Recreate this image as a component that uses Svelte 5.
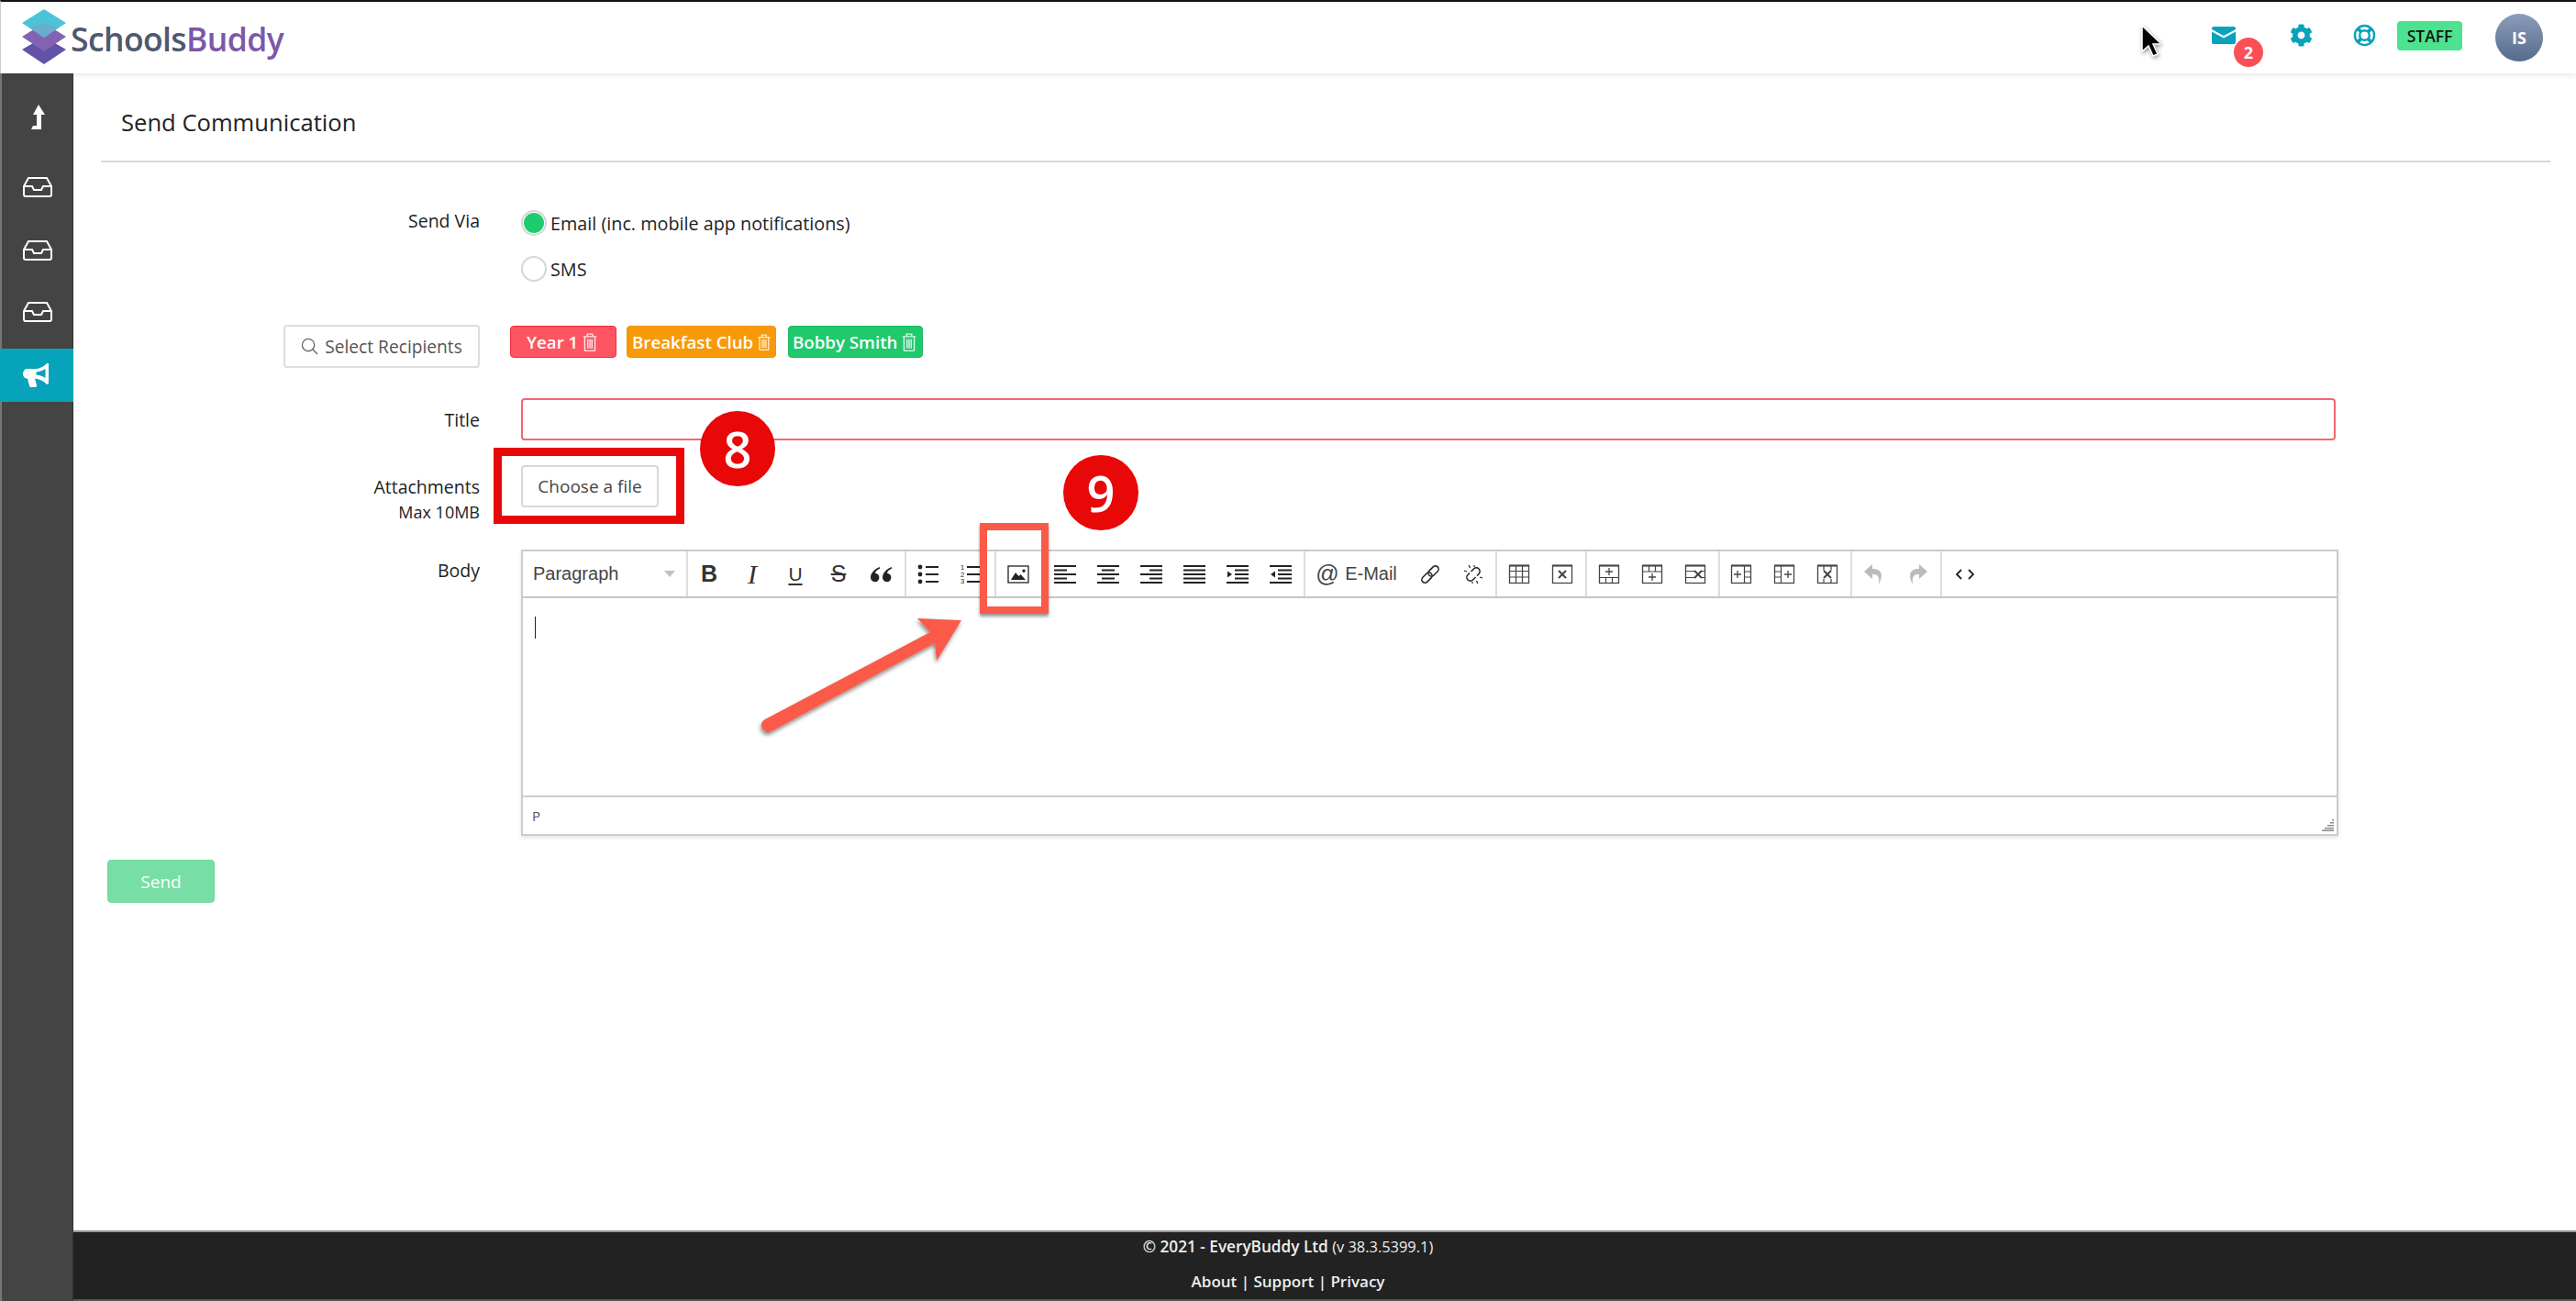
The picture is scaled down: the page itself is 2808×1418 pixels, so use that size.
<script>
  const L = (d) => `<path d="${d}" stroke="currentColor" stroke-width="1.9" fill="none"/>`;
  const T = (d) => `<path d="${d}" stroke="currentColor" stroke-width="1.2" fill="none"/>`;
  const F = (d) => `<path d="${d}" fill="currentColor" stroke="none"/>`;
  const frame = `<rect x="1.5" y="2.5" width="21" height="19" fill="none" stroke="currentColor" stroke-width="1.3"/><path d="M1 2.5h22" stroke="currentColor" stroke-width="2"/>`;
  const X = (x, y) => `<path d="M${x - 4} ${y - 4}l8 8M${x + 4} ${y - 4}l-8 8" stroke="currentColor" stroke-width="2" fill="none"/>`;
  const P = (x, y) => `<path d="M${x - 4} ${y}h8M${x} ${y - 4}v8" stroke="currentColor" stroke-width="1.3" fill="none"/>`;
  const link = `<g transform="rotate(-45 12 12)" fill="none" stroke="currentColor" stroke-width="1.5"><rect x="0.5" y="8.5" width="13" height="7" rx="3.5"/><rect x="10.5" y="8.5" width="13" height="7" rx="3.5"/></g>`;
  const icons = {
    quote: F('M10 4C5 6 0 10 0 15.500a4.700 4.700 0 1 0 5-4.700c.2-2 2-4 5-5zM23 4c-5 2-10 6-10 11.500a4.700 4.700 0 1 0 5-4.700c.2-2 2-4 5-5z'),
    ul: `<circle cx="3" cy="4" r="2.400" fill="currentColor"/><circle cx="3" cy="12" r="2.400" fill="currentColor"/><circle cx="3" cy="20" r="2.400" fill="currentColor"/>` + L('M9 4h14M9 12h14M9 20h14'),
    ol: `<text x="0" y="7" font-size="7.500" font-family="Liberation Sans" fill="currentColor">1</text><text x="0" y="14.500" font-size="7.500" font-family="Liberation Sans" fill="currentColor">2</text><text x="0" y="22" font-size="7.500" font-family="Liberation Sans" fill="currentColor">3</text>` + L('M7 4h16M7 12h16M7 20h16'),
    image: `<rect x="1" y="3" width="22" height="18" fill="none" stroke="currentColor" stroke-width="1.300"/>` + F('M4 18l5-8 3.500 4 2-2 5.500 6zM18 6.500a1.700 1.700 0 1 0 .01 0z'),
    al: L('M0 3h24M0 7.500h14M0 12h24M0 16.500h14M0 21h24'),
    ac: L('M0 3h24M5 7.500h14M0 12h24M5 16.500h14M0 21h24'),
    ar: L('M0 3h24M10 7.500h14M0 12h24M10 16.500h14M0 21h24'),
    aj: L('M0 3h24M0 7.500h24M0 12h24M0 16.500h24M0 21h24'),
    indent: L('M0 3h24M9 7.500h15M9 12h15M9 16.500h15M0 21h24') + F('M1 8.500l5 3.500-5 3.500z'),
    outdent: L('M0 3h24M9 7.500h15M9 12h15M9 16.500h15M0 21h24') + F('M6 8.500l-5 3.500 5 3.500z'),
    link,
    unlink: `<path d="M9.500 9l3-3a3.500 3.500 0 0 1 5.500 5.500l-2 2M14.500 15l-3 3a3.500 3.500 0 0 1-5.500-5.500l2-2" fill="none" stroke="currentColor" stroke-width="1.500"/>` + T('M7 2l1.500 3M2 8l3 1M17 22l-1.500-3M22 16l-3-1M13 2v2M11 22v-2'),
    table: frame + T('M1.500 8.500h21M1.500 15h21M8.500 2.500v19M15.500 2.500v19'),
    tabledel: frame + X(12, 12),
    rowbefore: frame + T('M1.500 15.500h21M8.500 15.500v6M15.500 15.500v6') + P(12, 9),
    rowafter: frame + T('M1.500 9h21M8.500 2.500v6.500M15.500 2.500v6.500') + P(12, 15),
    rowdel: frame + T('M1.500 8.500h10M1.500 15.500h10M18 8.500h4.500M18 15.500h4.500') + X(15, 12),
    colbefore: frame + T('M15.500 2.500v19M15.500 9h7M15.500 15h7') + P(8, 12),
    colafter: frame + T('M8.500 2.500v19M1.500 9h7M1.500 15h7') + P(16, 12),
    coldel: frame + T('M8 2.500v5M16 2.500v5M8 17v4.500M16 17v4.500') + X(12, 12),
    undo: F('M10 1L1 9l9 8v-5c6 0 8 2 7 11 5-10 4-17-7-17z'),
    redo: F('M14 1l9 8-9 8v-5c-6 0-8 2-7 11C2 13 3 6 14 6z'),
    code: `<path d="M8 7l-5 5 5 5M16 7l5 5-5 5" fill="none" stroke="currentColor" stroke-width="1.800"/>`
  };
  const groups = [
    { w: 238, items: ['#B', '#I', '#U', '#S', 'quote'] },
    { w: 98, items: ['ul', 'ol'] },
    { w: 52, items: ['image'] },
    { w: 285, items: ['al', 'ac', 'ar', 'aj', 'indent', 'outdent'] },
    { w: 209, items: ['@email', 'link', 'unlink'] },
    { w: 98, items: ['table', 'tabledel'] },
    { w: 145, items: ['rowbefore', 'rowafter', 'rowdel'] },
    { w: 144, items: ['colbefore', 'colafter', 'coldel'] },
    { w: 98, items: ['undo', 'redo'] },
    { w: 54, items: ['code'] }
  ];
  const glyphClass = { B: 'g-b', I: 'g-i', U: 'g-u', S: 'g-s' };
  const tags = [
    { label: 'Year 1', cls: 'red' },
    { label: 'Breakfast Club', cls: 'orange' },
    { label: 'Bobby Smith', cls: 'green' }
  ];
  const gear = 'M487.4 315.7l-42.6-24.6c4.3-23.2 4.3-47 0-70.2l42.6-24.6c4.9-2.8 7.1-8.6 5.5-14-11.1-35.6-30-67.8-54.7-94.6-3.8-4.1-10-5.1-14.8-2.3L380.8 110c-17.9-15.4-38.5-27.3-60.8-35.1V25.8c0-5.6-3.9-10.5-9.4-11.7-36.7-8.2-74.3-7.8-109.2 0-5.5 1.2-9.4 6.1-9.4 11.7V75c-22.2 7.9-42.8 19.8-60.8 35.1L88.7 85.5c-4.9-2.8-11-1.9-14.8 2.3-24.7 26.7-43.6 58.9-54.7 94.6-1.7 5.4.6 11.2 5.5 14L67.3 221c-4.3 23.2-4.3 47 0 70.2l-42.6 24.6c-4.9 2.8-7.1 8.6-5.5 14 11.1 35.6 30 67.8 54.7 94.6 3.8 4.1 10 5.1 14.8 2.3l42.6-24.6c17.9 15.4 38.5 27.3 60.8 35.1v49.2c0 5.6 3.9 10.5 9.4 11.7 36.7 8.2 74.3 7.8 109.2 0 5.5-1.2 9.4-6.1 9.4-11.7v-49.2c22.2-7.9 42.8-19.8 60.8-35.1l42.6 24.6c4.9 2.8 11 1.9 14.8-2.3 24.7-26.7 43.6-58.9 54.7-94.6 1.5-5.5-.7-11.3-5.6-14.1zM256 336c-44.1 0-80-35.9-80-80s35.9-80 80-80 80 35.9 80 80-35.9 80-80 80z';
</script>

<div class="app">
  <header class="top">
    <div class="logo">
      <svg class="logo-mark" viewBox="0 0 48 60" width="48" height="60">
        <path d="M24 30l24 14-24 16L0 44z" fill="#6353a8"/>
        <path d="M24 15l24 15-24 16L0 30z" fill="#8462b2"/>
        <path d="M24 0l24 15-24 16L0 15z" fill="#4bc4d6"/>
        <path d="M24 15l16 5-16 11L8 20z" fill="#68aecb"/>
      </svg>
      <span class="logo-text"><span class="s1">Schools</span><span class="s2">Buddy</span></span>
    </div>
    <div class="top-right">
      <div class="mail">
        <svg viewBox="0 0 26 19" width="26" height="19"><path d="M2 0h22a2 2 0 0 1 2 2v1L13 10 0 3V2a2 2 0 0 1 2-2zM0 5.500l13 7 13-7V17a2 2 0 0 1-2 2H2a2 2 0 0 1-2-2z" fill="#08a2bb"/></svg>
        <span class="badge">2</span>
      </div>
      <svg class="gear" viewBox="0 0 512 512" width="25" height="25"><path d={gear} fill="#08a2bb"/></svg>
      <svg class="ring" viewBox="0 0 26 26" width="25" height="25">
        <circle cx="13" cy="13" r="11" fill="none" stroke="#08a2bb" stroke-width="2.500"/>
        <circle cx="13" cy="13" r="5.500" fill="none" stroke="#08a2bb" stroke-width="2.500"/>
        <path d="M5 5l4 4M21 5l-4 4M5 21l4-4M21 21l-4-4" stroke="#08a2bb" stroke-width="4"/>
      </svg>
      <span class="staff">STAFF</span>
      <span class="avatar">IS</span>
    </div>
  </header>

  <div class="shell">
    <nav class="side">
      <div class="nav-item">
        <svg viewBox="0 0 24 30" width="24" height="30"><path d="M13 0l7 11h-4v16H5l2-4h4V11H7z" fill="#fff"/></svg>
      </div>
      {#each [0, 1, 2] as i}
        <div class="nav-item">
          <svg viewBox="0 0 32 22" width="32" height="22" fill="none" stroke="#fff" stroke-width="2"><path d="M6 1h20l5 9v9a2 2 0 0 1-2 2H3a2 2 0 0 1-2-2v-9zM1 10h9l2 4h8l2-4h9"/></svg>
        </div>
      {/each}
      <div class="nav-item active">
        <svg viewBox="0 0 30 26" width="30" height="26"><path d="M28 0v22l-2 1c-4-4-8-6-13-6.500L15 24c.2 1-.5 2-1.500 2H9c-1 0-1.500-.5-2-1.500L5 16.500H4C2 16.500 0 14 0 11.500S2 6 4 6h8c6 0 10-2 14-6zM24.500 6c-3 2-6 3-10 3.500v3c4 .5 7 1.500 10 3.500z" fill="#fff" fill-rule="evenodd"/></svg>
      </div>
    </nav>

    <main class="main">
      <div class="page-head"><h1>Send Communication</h1></div>

      <section class="form">
        <div class="row via">
          <div class="label lab-via">Send Via</div>
          <div class="radios">
            <div class="radio-line"><span class="radio on"></span><span>Email (inc. mobile app notifications)</span></div>
            <div class="radio-line"><span class="radio"></span><span>SMS</span></div>
          </div>
        </div>

        <div class="row rec">
          <div class="label">
            <button class="select-btn">
              <svg viewBox="0 0 20 20" width="19" height="19" fill="none" stroke="#666" stroke-width="1.400"><circle cx="8.500" cy="8.500" r="7"/><path d="M13.500 13.500l5.500 5.500"/></svg>
              Select Recipients
            </button>
          </div>
          <div class="tags">
            {#each tags as t}
              <span class="tag {t.cls}">{t.label}
                <svg viewBox="0 0 14 18" width="16" height="20" fill="none" stroke="currentColor" stroke-width="1.300" opacity="0.850"><path d="M0.500 3.500h13M4.500 3.500V1h5v2.500M2 3.500v13a1 1 0 0 0 1 1h8a1 1 0 0 0 1-1v-13M5 6v9M7 6v9M9 6v9"/></svg>
              </span>
            {/each}
          </div>
        </div>

        <div class="row title-row">
          <div class="label">Title</div>
          <input class="title-input" type="text" />
        </div>

        <div class="row attach">
          <div class="label"><div>Attachments</div><div class="small">Max 10MB</div></div>
          <button class="file-btn">Choose a file</button>
        </div>

        <div class="row body-row">
          <div class="label lab-body">Body</div>
          <div class="editor">
            <div class="toolbar">
              <div class="format"><span>Paragraph</span><span class="caret"></span></div>
              {#each groups as g}
                <div class="group" style="width:{g.w}px">
                  {#each g.items as it}
                    {#if it[0] === '#'}
                      <span class="tb glyph {glyphClass[it[1]]}">{it[1]}</span>
                    {:else if it === '@email'}
                      <span class="tb email"><span class="at">@</span> E-Mail</span>
                    {:else}
                      <span class="tb" class:muted={it === 'undo' || it === 'redo'} class:table-ic={it.startsWith('table') || it.startsWith('row') || it.startsWith('col')}>
                        <svg viewBox="0 0 24 24" width="24" height="24">{@html icons[it]}</svg>
                      </span>
                    {/if}
                  {/each}
                </div>
              {/each}
            </div>
            <div class="edit-area"><span class="text-caret"></span></div>
            <div class="status">P
              <svg class="grip" viewBox="0 0 14 14" width="14" height="14" fill="#888">
                <rect x="12" y="1" width="2" height="1.500"/><rect x="10" y="4" width="4" height="1.500"/><rect x="7" y="7" width="7" height="1.500"/><rect x="4" y="10" width="10" height="1.500"/><rect x="1" y="12.500" width="13" height="1.500"/>
              </svg>
            </div>
          </div>
        </div>

        <button class="send">Send</button>
      </section>

      <div class="spacer"></div>

      <footer class="foot">
        <div><span class="strong">© 2021 - EveryBuddy Ltd</span> <span class="ver">(v 38.3.5399.1)</span></div>
        <div class="foot-links">About | Support | Privacy</div>
      </footer>
    </main>
  </div>

  <!-- annotations laid over the screenshot -->
  <svg class="cursor" viewBox="0 0 22 36" width="22" height="36">
    <path d="M2 1v28l7-6 5 11 5-2-5-11h9z" fill="#000" stroke="#fff" stroke-width="1.500"/>
  </svg>
  <div class="box-file"></div>
  <div class="box-image"></div>
  <span class="num n8">8</span>
  <span class="num n9">9</span>
  <svg class="arrow" viewBox="0 0 240 130" width="240" height="130">
    <defs><filter id="sh" x="-10%" y="-10%" width="120%" height="130%"><feDropShadow dx="-1" dy="3" stdDeviation="2" flood-color="#000" flood-opacity="0.450"/></filter></defs>
    <path d="M219 3l-48-2 14 15L5 111a7 7 0 0 0-3 10 7 7 0 0 0 10 3l178-96 2 19z" fill="#fb5a48" filter="url(#sh)"/>
  </svg>
</div>

<style>
  :global(body) { margin: 0; background: #fff; }
  .app { position: relative; width: 2808px; height: 1418px; overflow: hidden; display: flex; flex-direction: column; font-family: "Open Sans", sans-serif; color: #222; background: #fff; }

  .top { flex: 0 0 80px; box-sizing: border-box; border-top: 2px solid #111; border-left: 1px solid #ccc; display: flex; align-items: center; justify-content: space-between; background: #fff; box-shadow: 0 3px 5px rgba(0,0,0,.08); position: relative; z-index: 1; }
  .logo { display: flex; align-items: center; padding-left: 23px; gap: 5px; margin-top: -2px; }
  .logo-text { font-size: 35.500px; font-weight: 600; letter-spacing: -0.6px; margin-top: 4px; }
  .s1 { color: #4f596d; }
  .s2 { color: #7b58a8; }
  .top-right { display: flex; align-items: center; padding-right: 36px; }
  .mail { position: relative; display: flex; margin-top: -6px; }
  .badge { position: absolute; left: 24px; top: 12px; width: 32px; height: 32px; border-radius: 50%; background: #fb4f57; color: #fff; font-size: 18px; font-weight: 700; display: flex; align-items: center; justify-content: center; }
  .gear { margin-left: 59px; margin-top: -6px; }
  .ring { margin-left: 44px; margin-top: -6px; }
  .staff { margin-left: 23px; width: 71px; height: 32px; margin-top: -4px; box-sizing: border-box; border-radius: 4px; background: #4de28f; color: #111; font-size: 17.500px; font-weight: 600; display: flex; align-items: center; justify-content: center; }
  .avatar { margin-left: 36px; width: 52px; height: 52px; margin-top: 0; border-radius: 50%; background: linear-gradient(#8a9dba, #566b8b); color: #fff; font-size: 18px; font-weight: 700; display: flex; align-items: center; justify-content: center; }

  .shell { flex: 1; display: flex; min-height: 0; }
  .side { flex: 0 0 80px; box-sizing: border-box; background: #444; border-left: 2px solid #777; border-right: 1px solid #333; padding-top: 15px; display: flex; flex-direction: column; }
  .nav-item { height: 68px; display: flex; align-items: center; justify-content: center; }
  .nav-item:nth-child(2) { margin-top: 7px; }
  .nav-item:nth-child(3) { margin-top: 1px; }
  .nav-item:nth-child(4) { margin-top: -1px; }
  .nav-item.active { height: 58px; margin-top: 6px; margin-left: -2px; margin-right: -1px; background: #06a3bb; }

  .main { flex: 1; min-width: 0; display: flex; flex-direction: column; padding-left: 30px; }
  .page-head { height: 97px; margin-right: 28px; box-sizing: border-box; border-bottom: 2px solid #d8d8d8; padding: 39px 0 0 22px; }
  h1 { margin: 0; font-size: 25.600px; line-height: 30px; font-weight: 500; color: #222; }

  .form { padding-top: 41px; font-size: 19.500px; }
  .row { display: flex; gap: 45px; }
  .label { width: 413px; flex: none; text-align: right; font-weight: 500; font-size: 19.500px; color: #222; display: flex; flex-direction: column; justify-content: center; align-items: flex-end; }
  .lab-via { justify-content: flex-start; padding-top: 11px; line-height: 24px; height: 50px; box-sizing: border-box; }
  .lab-body { justify-content: flex-start; padding-top: 11px; line-height: 24px; }
  .small { font-size: 18px; font-weight: 500; line-height: 22px; margin-top: 4px; }
  .attach { height: 46px; }
  .attach .label { justify-content: flex-start; line-height: 24px; padding-top: 12px; height: 60px; box-sizing: border-box; }
  .radios { display: flex; flex-direction: column; }
  .radio-line { height: 50px; display: flex; align-items: center; gap: 4px; font-weight: 500; font-size: 19.800px; color: #222; }
  .radio { width: 28px; height: 28px; box-sizing: border-box; border: 2px solid #d6d6d6; border-radius: 50%; background: #fff; position: relative; }
  .radio.on::after { content: ""; position: absolute; inset: 1px; border-radius: 50%; background: #1ecb6e; }

  .rec { margin-top: 36px; gap: 33px; }
  .select-btn { height: 47px; width: 214px; box-sizing: border-box; border: 2px solid #ddd; border-radius: 4px; background: #fff; color: #555; font: 500 19.200px "Open Sans", sans-serif; display: flex; align-items: center; justify-content: center; gap: 7px; padding: 0; }
  .tags { display: flex; gap: 11px; align-items: flex-start; margin-top: 1px; }
  .tag { height: 35px; box-sizing: border-box; border-radius: 4px; border: 1px solid; color: #fff; font-size: 18.700px; font-weight: 600; display: flex; align-items: center; gap: 5px; white-space: nowrap; }
  .red { background: #fd5561; border-color: #f02c3d; padding: 0 12px 0 17px; width: 116px; }
  .orange { background: #f79a0a; border-color: #ef9100; padding: 0 5px; width: 163px; margin-right: 2px; }
  .green { background: #1fc96c; border-color: #1ab862; padding: 0 5px 0 4px; width: 147px; }

  .title-row { margin-top: 33px; }
  .title-input { width: 1978px; height: 46px; box-sizing: border-box; border: 2px solid #f5656e; border-radius: 4px; background: #fff; outline: none; }

  .attach { margin-top: 27px; }
  .file-btn { width: 150px; height: 46px; box-sizing: border-box; border: 2px solid #d8d8d8; border-radius: 4px; background: #fff; color: #444; font: 500 19px "Open Sans", sans-serif; padding: 0; }

  .body-row { margin-top: 46px; margin-bottom: 26px; }
  .editor { width: 1981px; height: 312px; box-sizing: border-box; border: 2px solid #ccc; display: flex; flex-direction: column; box-shadow: 0 2px 4px rgba(0,0,0,.12); background: #fff; }
  .toolbar { height: 49px; flex: none; border-bottom: 2px solid #c6c6c6; display: flex; box-sizing: content-box; }
  .format { width: 178px; box-sizing: border-box; padding: 0 12px 0 11px; display: flex; align-items: center; justify-content: space-between; font: 20px "Liberation Sans", sans-serif; color: #444; flex: none; }
  .caret { width: 0; height: 0; border: 6px solid transparent; border-top: 7px solid #b9c2cc; border-bottom: 0; }
  .group { flex: none; box-sizing: border-box; border-left: 2px solid #ddd; display: flex; align-items: center; justify-content: center; padding-right: 2px; }
  .group:last-child { justify-content: flex-start; padding-left: 1px; padding-right: 0; }
  .tb { width: 47px; flex: none; display: flex; align-items: center; justify-content: center; color: #222; height: 100%; }
  .tb svg { display: block; }
  .table-ic { color: #444; }
  .muted { color: #bbb; }
  .glyph { font: 25px "Liberation Serif", serif; color: #333; }
  .g-b { font-weight: 700; font-family: "Liberation Sans", sans-serif; font-size: 25px; }
  .g-i { font-style: italic; font-size: 30px; }
  .g-u { text-decoration: underline; font-family: "Liberation Sans", sans-serif; font-size: 21px; text-underline-offset: 3px; }
  .g-s { text-decoration: line-through; font-family: "Liberation Sans", sans-serif; font-size: 25px; }
  .email { width: 114px; font: 20px "Liberation Sans", sans-serif; color: #444; white-space: pre; }
  .at { font-size: 25px; margin-right: 1px; }
  .edit-area { flex: 1; padding: 20px 0 0 13px; }
  .text-caret { display: block; width: 1px; height: 24px; background: #222; }
  .status { height: 42px; flex: none; box-sizing: border-box; border-top: 2px solid #ccc; padding: 6px 0 0 10px; color: #555; font-size: 15px; line-height: 28px; position: relative; }
  .grip { position: absolute; right: 3px; bottom: 3px; }

  .send { display: block; margin-left: 7px; width: 117px; height: 47px; border: 1px solid #6ed79c; border-radius: 4px; background: #77dfa5; color: #fff; font: 500 19px "Open Sans", sans-serif; padding: 0; }
  .spacer { flex: 1; }
  .foot { height: 77px; margin-left: -30px; padding-right: 80px; box-sizing: border-box; background: #222; border-top: 2px solid #999; border-bottom: 2px solid #555; color: #eee; text-align: center; font-size: 17.200px; font-weight: 600; padding-top: 4px; line-height: 24px; }
  .ver { font-size: 16.400px; font-weight: 500; }
  .foot-links { margin-top: 14px; font-size: 17px; }

  .cursor { position: absolute; left: 2333px; top: 27px; filter: drop-shadow(1px 2px 2px rgba(0,0,0,.4)); z-index: 3; }
  .box-file { position: absolute; left: 538px; top: 488px; width: 208px; height: 83px; box-sizing: border-box; border: 9px solid #e80808; z-index: 3; }
  .box-image { position: absolute; left: 1068px; top: 570px; width: 75px; height: 99px; box-sizing: border-box; border: 8px solid #fb5a48; box-shadow: 0 3px 3px rgba(0,0,0,.4); z-index: 3; }
  .num { position: absolute; width: 82px; height: 82px; border-radius: 50%; background: #e80808; color: #fff; font-size: 54px; font-weight: 600; display: flex; align-items: center; justify-content: center; z-index: 3; }
  .n8 { left: 763px; top: 448px; }
  .n9 { left: 1159px; top: 496px; }
  .arrow { position: absolute; left: 829px; top: 673px; z-index: 3; overflow: visible; }
</style>
